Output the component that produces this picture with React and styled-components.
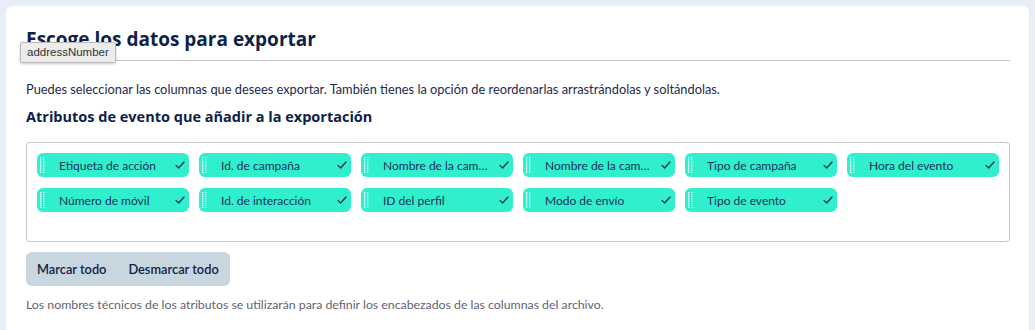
import styled, { createGlobalStyle } from "styled-components";

const GlobalStyle = createGlobalStyle`
  html, body {
    margin: 0;
    padding: 0;
    background: #e9eef6;
    font-family: "Lato", "Noto Sans", sans-serif;
    color: #1b2b4b;
  }
`;

const Page = styled.div`
  padding: 6px 6px 0 6px;
  height: 330px;
  box-sizing: border-box;
  overflow: hidden;
`;

const Card = styled.div`
  background: #fff;
  border-radius: 6px 6px 0 0;
  padding: 20px 19px 40px 20px;
  min-height: 400px;
`;

const Header = styled.div`
  position: relative;
  border-bottom: 1px solid #c4c4c4;
  padding-bottom: 8px;
`;

const Title = styled.h1`
  margin: 0;
  font-family: "Open Sans", sans-serif;
  font-weight: 700;
  font-size: 19px;
  line-height: 26px;
  color: #0e2248;
`;

const Tooltip = styled.div`
  position: absolute;
  left: -6px;
  top: 16px;
  background: #ececec;
  border: 1px solid #b9b9b9;
  border-radius: 2px;
  padding: 3px 6px;
  font-family: "Liberation Sans", Arial, sans-serif;
  font-size: 11.5px;
  line-height: 13px;
  color: #333;
  box-shadow: 0 1px 3px rgba(0, 0, 0, 0.2);
`;

const Intro = styled.p`
  margin: 19px 0 0 0;
  font-size: 12.8px;
  line-height: 18px;
  color: #1b2b4b;
`;

const Subtitle = styled.h2`
  margin: 9px 0 0 0;
  font-family: "Open Sans", sans-serif;
  font-weight: 700;
  font-size: 14.5px;
  line-height: 20px;
  color: #0e2248;
`;

const ChipBox = styled.div`
  margin-top: 15px;
  border: 1px solid #c8c8c8;
  border-radius: 4px;
  padding: 10px 10px 29px 10px;
  display: grid;
  grid-template-columns: repeat(6, 152px);
  column-gap: 10px;
  row-gap: 11px;
`;

const Chip = styled.div`
  height: 24px;
  background: #30efcc;
  border-radius: 6px;
  display: flex;
  align-items: center;
  padding: 0 4px 0 3px;
  font-size: 12px;
  color: #1d2f5e;
  cursor: grab;
`;

const Handle = styled.svg`
  width: 5px;
  height: 17px;
  flex: none;
  margin-right: 14px;
`;

const Label = styled.span`
  flex: 1;
  white-space: nowrap;
  overflow: hidden;
  text-overflow: ellipsis;
`;

const Check = styled.svg`
  flex: none;
  width: 10px;
  height: 10px;
  margin-left: 6px;
`;

const ButtonGroup = styled.div`
  margin-top: 10px;
  display: inline-flex;
  background: #c8d6df;
  border-radius: 6px;
  height: 34px;
  align-items: center;
  padding: 0 11px;
  gap: 22px;
`;

const GroupButton = styled.button`
  border: none;
  background: none;
  padding: 0;
  font-family: "Lato", sans-serif;
  font-size: 12.8px;
  font-weight: 600;
  color: #0e2248;
  cursor: pointer;
`;

const Footnote = styled.p`
  margin: 11px 0 0 0;
  font-size: 12.3px;
  color: #5f6470;
`;

const chips = [
  "Etiqueta de acción",
  "Id. de campaña",
  "Nombre de la campaña",
  "Nombre de la campaña externa",
  "Tipo de campaña",
  "Hora del evento",
  "Número de móvil",
  "Id. de interacción",
  "ID del perfil",
  "Modo de envío",
  "Tipo de evento",
];

const dots = [];
for (let r = 0; r < 8; r++) {
  dots.push([0, r * 2.1], [3, r * 2.1]);
}

export default function App() {
  return (
    <>
      <GlobalStyle />
      <Page>
        <Card>
          <Header>
            <Title>Escoge los datos para exportar</Title>
            <Tooltip>addressNumber</Tooltip>
          </Header>
          <Intro>
            Puedes seleccionar las columnas que desees exportar. También tienes la opción de reordenarlas arrastrándolas y soltándolas.
          </Intro>
          <Subtitle>Atributos de evento que añadir a la exportación</Subtitle>
          <ChipBox>
            {chips.map((c) => (
              <Chip key={c} title={c}>
                <Handle viewBox="0 0 5 17">
                  {dots.map(([x, y], i) => (
                    <rect key={i} x={x} y={y} width="1.3" height="1.3" fill="#fff" />
                  ))}
                </Handle>
                <Label>{c}</Label>
                <Check viewBox="0 0 10 10">
                  <path d="M1 5.4 L3.6 8 L9 2" fill="none" stroke="#1d2f5e" strokeWidth="1.3" strokeLinecap="round" strokeLinejoin="round" />
                </Check>
              </Chip>
            ))}
          </ChipBox>
          <ButtonGroup>
            <GroupButton>Marcar todo</GroupButton>
            <GroupButton>Desmarcar todo</GroupButton>
          </ButtonGroup>
          <Footnote>
            Los nombres técnicos de los atributos se utilizarán para definir los encabezados de las columnas del archivo.
          </Footnote>
        </Card>
      </Page>
    </>
  );
}
